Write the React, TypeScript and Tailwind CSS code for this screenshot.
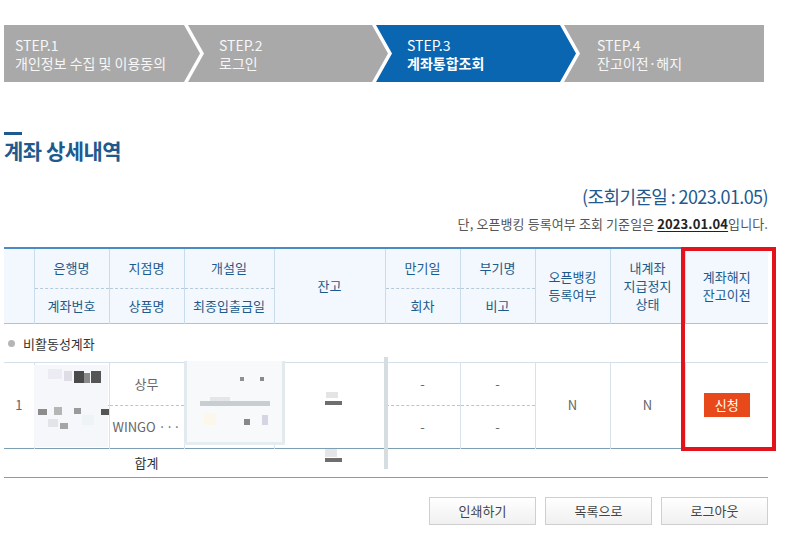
import React from 'react';

const steps = [
  { no: 'STEP.1', label: '개인정보 수집 및 이용동의', active: false },
  { no: 'STEP.2', label: '로그인', active: false },
  { no: 'STEP.3', label: '계좌통합조회', active: true },
  { no: 'STEP.4', label: '잔고이전·해지', active: false },
];

// redaction mosaic blocks, coords relative to the table wrapper (x-4, y-248)
const mosaic: [number, number, number, number, string][] = [
  [30, 118, 74, 82, '#f6f7fb'],
  [44, 122, 14, 10, '#ecebf3'],
  [70, 124, 10, 12, '#4a4a4a'],
  [80, 126, 6, 10, '#8a8a8a'],
  [87, 124, 10, 12, '#555555'],
  [60, 124, 8, 10, '#dedde6'],
  [34, 162, 9, 6, '#8c8c8c'],
  [50, 160, 8, 8, '#b5b5b5'],
  [70, 161, 7, 6, '#9a9a9a'],
  [97, 162, 8, 6, '#555555'],
  [56, 176, 8, 6, '#a5a5a5'],
  [44, 172, 10, 8, '#e3e3ea'],
  [78, 168, 12, 10, '#eef3f6'],
  [180, 114, 100, 84, '#f7f9fb'],
  [180, 114, 3, 84, '#e3eaee'],
  [278, 114, 3, 84, '#e3eaee'],
  [180, 195, 101, 3, '#e6edf0'],
  [236, 130, 4, 4, '#909090'],
  [256, 130, 4, 4, '#8a8a8a'],
  [196, 154, 70, 5, '#c8cdd2'],
  [206, 150, 20, 4, '#e4e6ea'],
  [240, 172, 6, 6, '#888888'],
  [258, 168, 6, 10, '#d5d5e3'],
  [200, 166, 12, 12, '#fbf7ea'],
  [322, 145, 12, 6, '#e4e4e4'],
  [321, 154, 17, 4, '#6e6e6e'],
  [321, 202, 12, 8, '#e6e6e6'],
  [321, 211, 17, 4, '#6e6e6e'],
  [380, 110, 4, 112, '#d6dde0'],
];

export default function App() {
  return (
    <div
      className="w-[785px] h-[549px] bg-white px-[4px] pt-[25px] text-[13px] text-[#333]"
      style={{ fontFamily: '"Noto Sans CJK KR", "Noto Sans", sans-serif' }}
    >
      {/* step bar */}
      <div className="flex h-[57px] w-[764px]">
        {steps.map((s, i) => {
          const shape =
            i === 0
              ? 'w-[196px] [clip-path:polygon(0_0,calc(100%_-_16px)_0,100%_50%,calc(100%_-_16px)_100%,0_100%)] pl-[11px]'
              : i === steps.length - 1
              ? 'w-[200px] -ml-[12px] [clip-path:polygon(0_0,100%_0,100%_100%,0_100%,16px_50%)] pl-[33px]'
              : 'w-[200px] -ml-[12px] [clip-path:polygon(0_0,calc(100%_-_16px)_0,100%_50%,calc(100%_-_16px)_100%,0_100%,16px_50%)] pl-[31px]';
          return (
            <div
              key={s.no}
              className={`${shape} flex flex-col justify-center leading-[18px] text-[14px] ${
                s.active ? 'bg-[#0a66b1] text-white' : 'bg-[#a9a9a9] text-[#f7f7f7]'
              }`}
            >
              <span>{s.no}</span>
              <span className={s.active ? 'font-bold' : ''}>{s.label}</span>
            </div>
          );
        })}
      </div>

      {/* title */}
      <div className="mt-[50px] w-[18px] h-[3px] bg-[#1e5a8e]" />
      <h2 className="mt-[2px] text-[21px] leading-[26px] font-bold text-[#1e5a8e] tracking-[-0.5px]">
        계좌 상세내역
      </h2>

      <div className="w-[764px] mt-[22px] text-right text-[18px] leading-[22px] text-[#1e5a8e] tracking-[-0.6px]">
        (조회기준일 : 2023.01.05)
      </div>
      <div className="w-[764px] mt-[9px] text-right text-[13px] leading-[16px] text-[#555] tracking-[0.1px]">
        단, 오픈뱅킹 등록여부 조회 기준일은{' '}
        <span className="text-[#222] font-semibold underline underline-offset-2">2023.01.04</span>입니다.
      </div>

      {/* table */}
      <div className="relative mt-[15px] w-[764px]">
        <table className="w-[764px] table-fixed border-collapse text-center">
          <colgroup>
            <col className="w-[30px]" />
            <col className="w-[75px]" />
            <col className="w-[75px]" />
            <col className="w-[90px]" />
            <col className="w-[111px]" />
            <col className="w-[75px]" />
            <col className="w-[75px]" />
            <col className="w-[75px]" />
            <col className="w-[75px]" />
            <col className="w-[83px]" />
          </colgroup>
          <thead className="bg-[#f2f8fd] text-[#1d5a8c] text-[13px] leading-[18px]">
            <tr className="h-[40px] border-t-2 border-[#4b8ac3]">
              <th rowSpan={2} className="font-normal border-r border-[#c9dcec]" />
              <th className="font-normal border-r border-b border-dashed border-[#c9dcec] border-b-[#b6c9d9] [border-right-style:solid]">은행명</th>
              <th className="font-normal border-r border-b border-dashed border-[#c9dcec] border-b-[#b6c9d9] [border-right-style:solid]">지점명</th>
              <th className="font-normal border-r border-b border-dashed border-[#c9dcec] border-b-[#b6c9d9] [border-right-style:solid]">개설일</th>
              <th rowSpan={2} className="font-normal border-r border-[#c9dcec]">잔고</th>
              <th className="font-normal border-r border-b border-dashed border-[#c9dcec] border-b-[#b6c9d9] [border-right-style:solid]">만기일</th>
              <th className="font-normal border-r border-b border-dashed border-[#c9dcec] border-b-[#b6c9d9] [border-right-style:solid]">부기명</th>
              <th rowSpan={2} className="font-normal border-r border-[#c9dcec]">
                오픈뱅킹
                <br />
                등록여부
              </th>
              <th rowSpan={2} className="font-normal border-r border-[#c9dcec]">
                내계좌
                <br />
                지급정지
                <br />
                상태
              </th>
              <th rowSpan={2} className="font-normal">
                계좌해지
                <br />
                잔고이전
              </th>
            </tr>
            <tr className="h-[35px] border-b border-[#a9c4da]">
              <th className="font-normal border-r border-[#c9dcec]">계좌번호</th>
              <th className="font-normal border-r border-[#c9dcec]">상품명</th>
              <th className="font-normal border-r border-[#c9dcec]">최종입출금일</th>
              <th className="font-normal border-r border-[#c9dcec]">회차</th>
              <th className="font-normal border-r border-[#c9dcec]">비고</th>
            </tr>
          </thead>
          <tbody className="text-[13px] text-[#666]">
            <tr className="h-[39px] border-b border-[#d3e0ea]">
              <td colSpan={10} className="text-left pl-[4px] text-[#333]">
                <span className="inline-flex items-center gap-[8px]">
                  <span className="inline-block w-[7px] h-[7px] rounded-full bg-[#b5b5b5]" />
                  비활동성계좌
                </span>
              </td>
            </tr>
            <tr className="h-[43px]">
              <td rowSpan={2} className="border-r border-[#d7e2ea]">1</td>
              <td className="border-r border-b border-dashed border-[#d7e2ea] border-b-[#b7c6d2] [border-right-style:solid]" />
              <td className="border-r border-b border-dashed border-[#d7e2ea] border-b-[#b7c6d2] [border-right-style:solid]">상무</td>
              <td className="border-r border-b border-dashed border-[#d7e2ea] border-b-[#b7c6d2] [border-right-style:solid]" />
              <td rowSpan={2} className="border-r border-[#d7e2ea]" />
              <td className="border-r border-b border-dashed border-[#d7e2ea] border-b-[#b7c6d2] [border-right-style:solid]">-</td>
              <td className="border-r border-b border-dashed border-[#d7e2ea] border-b-[#b7c6d2] [border-right-style:solid]">-</td>
              <td rowSpan={2} className="border-r border-[#d7e2ea]">N</td>
              <td rowSpan={2} className="border-r border-[#d7e2ea]">N</td>
              <td rowSpan={2}>
                <button className="bg-[#e8491b] text-white text-[13px] leading-[24px] px-[11px]">신청</button>
              </td>
            </tr>
            <tr className="h-[43px] border-b border-[#7c9fb5]">
              <td className="border-r border-[#d7e2ea]" />
              <td className="border-r border-[#d7e2ea] whitespace-nowrap overflow-hidden">WINGO ···</td>
              <td className="border-r border-[#d7e2ea]" />
              <td className="border-r border-[#d7e2ea]">-</td>
              <td className="border-r border-[#d7e2ea]">-</td>
            </tr>
            <tr className="h-[29px] border-b border-[#7c9fb5]">
              <td />
              <td />
              <td className="text-[#333]">합계</td>
              <td colSpan={7} />
            </tr>
          </tbody>
        </table>

        {/* redaction mosaic over the masked cells */}
        <svg className="absolute left-0 top-0 pointer-events-none" width="764" height="232">
          {mosaic.map(([x, y, w, h, c], i) => (
            <rect key={i} x={x} y={y} width={w} height={h} fill={c} />
          ))}
        </svg>

        {/* highlight box */}
        <div className="absolute left-[677px] top-0 w-[95px] h-[204px] border-[4px] border-[#e3131d] pointer-events-none" />
      </div>

      {/* buttons */}
      <div className="w-[764px] mt-[19px] flex justify-end gap-[9px]">
        {['인쇄하기', '목록으로', '로그아웃'].map((b) => (
          <button
            key={b}
            className="w-[107px] h-[28px] border border-[#cfcfcf] bg-gradient-to-b from-white to-[#f0f0f0] text-[13px] text-[#444]"
          >
            {b}
          </button>
        ))}
      </div>
    </div>
  );
}
